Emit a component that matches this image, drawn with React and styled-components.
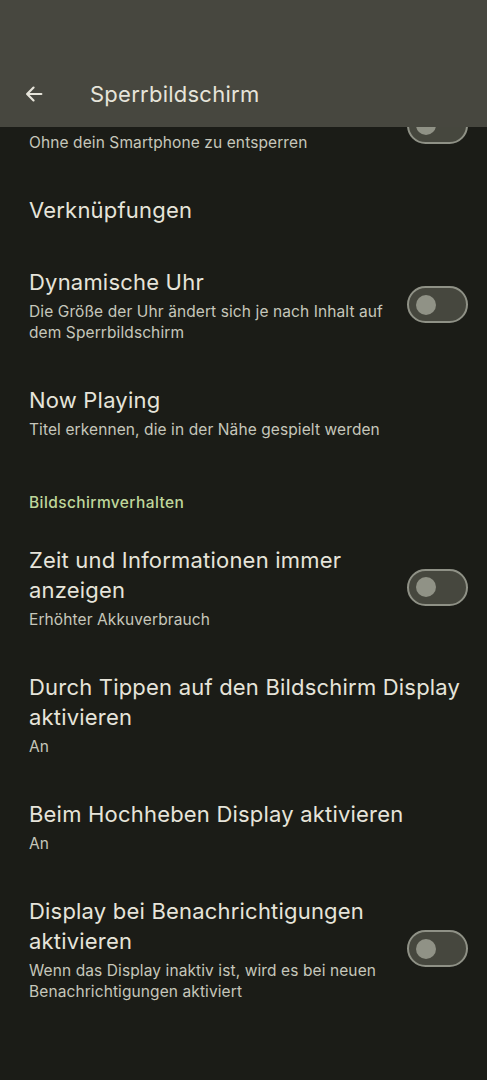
import React from "react";
import styled, { createGlobalStyle } from "styled-components";

const GlobalStyle = createGlobalStyle`
  html, body {
    margin: 0;
    padding: 0;
    background: #1b1c17;
  }
  * {
    box-sizing: border-box;
  }
`;

const Screen = styled.div`
  width: 487px;
  height: 1080px;
  display: flex;
  flex-direction: column;
  background: #1b1c17;
  font-family: Inter, Roboto, sans-serif;
  overflow: hidden;
`;

const TopBar = styled.header`
  height: 127px;
  flex-shrink: 0;
  background: #47473f;
  display: flex;
  align-items: flex-end;
  padding: 0 0 18px 22px;
`;

const BackButton = styled.button`
  width: 24px;
  height: 24px;
  padding: 0;
  border: none;
  background: none;
  display: flex;
  align-items: center;
  justify-content: center;
  margin-bottom: 3px;
`;

const BarTitle = styled.h1`
  margin: 0 0 0 44px;
  font-size: 22px;
  font-weight: 400;
  letter-spacing: 0.25px;
  line-height: 30px;
  color: #e6e4da;
`;

const Scroller = styled.div`
  flex: 1;
  overflow: hidden;
`;

const List = styled.div`
  margin-top: ${(p) => -p.$scroll}px;
  display: flex;
  flex-direction: column;
`;

const Row = styled.div`
  display: flex;
  align-items: center;
  gap: 16px;
  padding: 21px 19px 21px 29px;
`;

const TextBlock = styled.div`
  flex: 1;
  min-width: 0;
`;

const Title = styled.div`
  font-size: 22px;
  letter-spacing: 0.2px;
  line-height: 30px;
  color: #e6e4da;
`;

const Subtitle = styled.div`
  margin-top: 4px;
  font-size: 15.5px;
  letter-spacing: 0.1px;
  line-height: 21px;
  color: #c6c7bb;
`;

const SectionHeader = styled.div`
  padding: 31px 29px 11px;
  font-size: 15.5px;
  letter-spacing: 0.4px;
  line-height: 21px;
  font-weight: 500;
  color: #bfd69b;
`;

const Track = styled.div`
  width: 61px;
  height: 37px;
  flex-shrink: 0;
  border-radius: 19px;
  border: 2px solid #8f9186;
  background: #46473e;
  display: flex;
  align-items: center;
  padding-left: 7px;
`;

const Thumb = styled.div`
  width: 20px;
  height: 20px;
  border-radius: 50%;
  background: #909286;
`;

const Toggle = () => (
  <Track>
    <Thumb />
  </Track>
);

const BackArrow = () => (
  <svg width="22" height="22" viewBox="0 0 24 24" fill="none">
    <path
      d="M20 12H5M11.5 5L4.5 12l7 7"
      stroke="#e6e4da"
      strokeWidth="2.4"
      strokeLinecap="round"
      strokeLinejoin="round"
    />
  </svg>
);

const items = [
  {
    title: "Gerätesteuerung",
    subtitle: "Ohne dein Smartphone zu entsperren",
    toggle: true,
  },
  { title: "Verknüpfungen" },
  {
    title: "Dynamische Uhr",
    subtitle:
      "Die Größe der Uhr ändert sich je nach Inhalt auf dem Sperrbildschirm",
    toggle: true,
  },
  {
    title: "Now Playing",
    subtitle: "Titel erkennen, die in der Nähe gespielt werden",
  },
  { section: "Bildschirmverhalten" },
  {
    title: "Zeit und Informationen immer anzeigen",
    subtitle: "Erhöhter Akkuverbrauch",
    toggle: true,
  },
  {
    title: "Durch Tippen auf den Bildschirm Display aktivieren",
    subtitle: "An",
  },
  { title: "Beim Hochheben Display aktivieren", subtitle: "An" },
  {
    title: "Display bei Benachrichtigungen aktivieren",
    subtitle:
      "Wenn das Display inaktiv ist, wird es bei neuen Benachrichtigungen aktiviert",
    toggle: true,
  },
];

export default function App() {
  return (
    <Screen>
      <GlobalStyle />
      <TopBar>
        <BackButton aria-label="Zurück">
          <BackArrow />
        </BackButton>
        <BarTitle>Sperrbildschirm</BarTitle>
      </TopBar>
      <Scroller>
        <List $scroll={50.5}>
          {items.map((item, i) =>
            item.section ? (
              <SectionHeader key={i}>{item.section}</SectionHeader>
            ) : (
              <Row key={i}>
                <TextBlock>
                  <Title>{item.title}</Title>
                  {item.subtitle && <Subtitle>{item.subtitle}</Subtitle>}
                </TextBlock>
                {item.toggle && <Toggle />}
              </Row>
            )
          )}
        </List>
      </Scroller>
    </Screen>
  );
}
